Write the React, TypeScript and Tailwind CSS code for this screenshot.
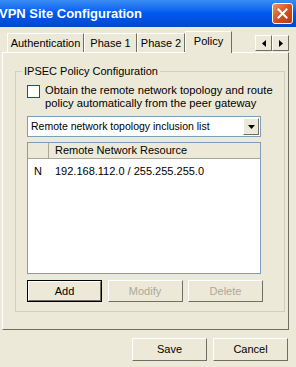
import React from "react";

const font = { fontFamily: '"Liberation Sans", Arial, sans-serif' };

function XpButton({ label, disabled, isDefault, className }: { label: string; disabled?: boolean; isDefault?: boolean; className?: string }) {
  const face = (
    <div
      className={`flex h-full w-full items-center justify-center border border-t-white border-l-white border-r-[#716f64] border-b-[#716f64] bg-[#ece9d8] text-[11px] ${
        disabled ? "text-[#aca899]" : "text-black"
      }`}
    >
      {label}
    </div>
  );
  if (isDefault) return <div className={`border border-black ${className ?? ""}`}>{face}</div>;
  return <div className={className}>{face}</div>;
}

function Tab({ label, active, w }: { label: string; active?: boolean; w: string }) {
  return (
    <div
      className={`flex items-center justify-center whitespace-nowrap border-l border-t border-r border-t-white border-l-white border-r-[#716f64] bg-[#ece9d8] text-[11px] ${w} ${
        active ? "z-10 -mb-px h-[22px] pb-[3px]" : "h-[19px]"
      }`}
    >
      {label}
    </div>
  );
}

export default function App() {
  return (
    <div className="relative h-[367px] w-[296px] overflow-hidden bg-[#ece9d8] text-black" style={font}>
      {/* title bar */}
      <div className="flex h-[27px] items-center justify-between bg-gradient-to-b from-[#3a8cf5] via-[#0058ee] to-[#0048d0] pr-[3px]">
        <span className="-ml-[1px] text-[13px] font-bold text-white">VPN Site Configuration</span>
        <div className="flex h-[21px] w-[21px] items-center justify-center rounded-[3px] border border-white bg-gradient-to-br from-[#f0906a] via-[#d8501e] to-[#b83a10]">
          <svg width="11" height="11" viewBox="0 0 11 11">
            <path d="M1.5 1.5 L9.5 9.5 M9.5 1.5 L1.5 9.5" stroke="white" strokeWidth="2" strokeLinecap="square" />
          </svg>
        </div>
      </div>

      {/* tab strip */}
      <div className="mt-[4px] flex h-[21px] items-end pl-[7px] pr-[7px]">
        <Tab label="Authentication" w="w-[77px]" />
        <Tab label="Phase 1" w="w-[53px]" />
        <Tab label="Phase 2" w="w-[48px]" />
        <Tab label="Policy" active w="w-[47px]" />
        <div className="ml-auto mb-[1px] flex self-end">
          {["left", "right"].map((d) => (
            <div
              key={d}
              className="flex h-[16px] w-[17px] items-center justify-center border border-t-white border-l-white border-r-[#716f64] border-b-[#716f64] bg-[#ece9d8]"
            >
              <svg width="4" height="7" viewBox="0 0 4 7">
                {d === "left" ? <path d="M4 0 L0 3.5 L4 7 Z" fill="black" /> : <path d="M0 0 L4 3.5 L0 7 Z" fill="black" />}
              </svg>
            </div>
          ))}
        </div>
      </div>

      {/* tab panel */}
      <div className="ml-[2px] h-[278px] w-[287px] border border-t-white border-l-white border-r-[#716f64] border-b-[#716f64] pl-[12px] pt-[11px]">
        <fieldset className="w-[260px] border border-[#d0d0bf] pb-[9px]">
          <legend className="ml-[6px] px-[2px] text-[11px] leading-[14px]">IPSEC Policy Configuration</legend>
          <div className="px-[11px]">
            <div className="mt-[6px] flex gap-[5px]">
              <div className="mt-[1px] h-[13px] w-[13px] shrink-0 border border-[#1c5180] bg-white" />
              <p className="whitespace-nowrap text-[11.2px] leading-[13px]">
                Obtain the remote network topology and route
                <br />
                policy automatically from the peer gateway
              </p>
            </div>

            <div className="mt-[6px] flex h-[21px] w-[234px] items-center border border-[#7f9db9] bg-white pl-[3px] pr-[1px]">
              <span className="flex-1 text-[10.5px]">Remote network topology inclusion list</span>
              <div className="flex h-[17px] w-[16px] items-center justify-center border border-t-white border-l-white border-r-[#716f64] border-b-[#716f64] bg-[#ece9d8]">
                <svg width="7" height="4" viewBox="0 0 7 4">
                  <path d="M0 0 L7 0 L3.5 4 Z" fill="black" />
                </svg>
              </div>
            </div>

            <div className="mt-[5px] h-[132px] w-[234px] border border-[#7f9db9] bg-white">
              <div className="flex h-[16px] border-b border-[#aca899] bg-[#ece9d8] text-[11px]">
                <div className="w-[21px] border-r border-[#aca899]" />
                <div className="flex-1 pl-[6px] leading-[15px]">Remote Network Resource</div>
              </div>
              <div className="mt-[4px] flex text-[11px]">
                <span className="w-[27px] pl-[6px]">N</span>
                <span>192.168.112.0 / 255.255.255.0</span>
              </div>
            </div>

            <div className="mt-[6px] flex w-[236px] justify-between">
              <XpButton label="Add" isDefault className="h-[22px] w-[75px]" />
              <XpButton label="Modify" disabled className="h-[22px] w-[75px]" />
              <XpButton label="Delete" disabled className="h-[22px] w-[75px]" />
            </div>
          </div>
        </fieldset>
      </div>

      {/* bottom buttons */}
      <div className="mt-[8px] flex justify-end gap-[6px] pr-[8px]">
        <XpButton label="Save" className="h-[23px] w-[75px]" />
        <XpButton label="Cancel" className="h-[23px] w-[75px]" />
      </div>
    </div>
  );
}
